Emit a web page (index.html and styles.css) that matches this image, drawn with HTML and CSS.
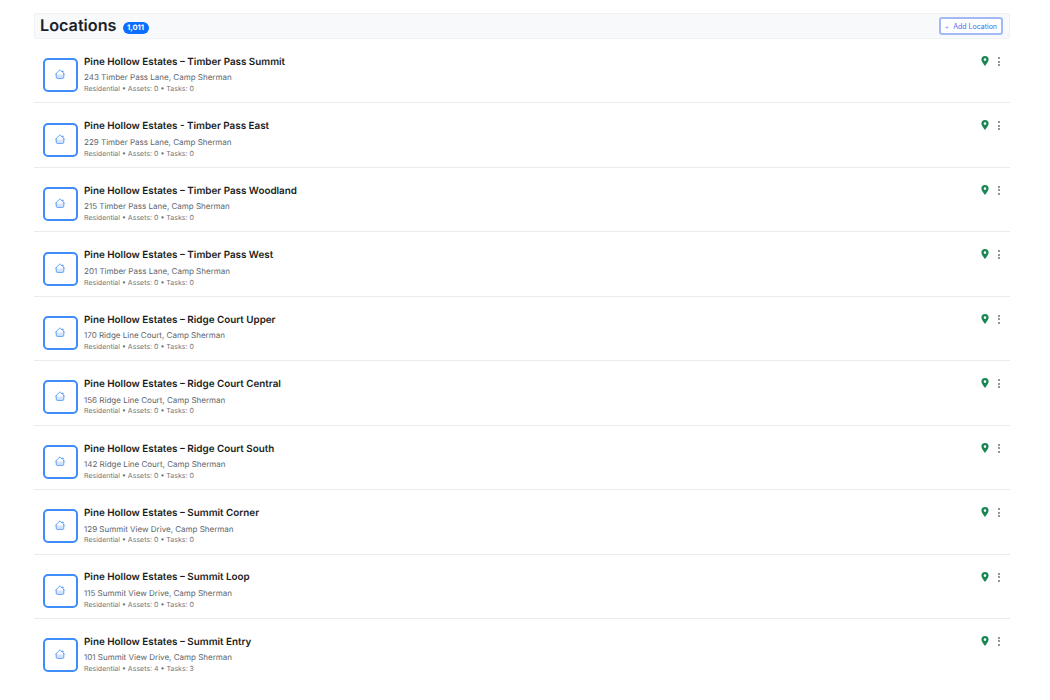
FILE: index.html
```html
<!DOCTYPE html>
<html lang="en">
  <head>
    <meta charset="UTF-8" />
    <title>Locations</title>
    <link rel="stylesheet" href="styles.css">
  </head>
  <body>
    <svg class="icon-defs" width="0" height="0">
      <symbol id="house" viewBox="0 0 12 12">
        <path d="M2.2 6.6h7.6v2.6a1.2 1.2 0 0 1-1.2 1.2H3.4a1.2 1.2 0 0 1-1.2-1.2z" fill="#d6e5ff" />
        <path d="M1.6 6.2 6 1.8l2.2 2.2V3h.9v1.9l1.3 1.3M2.2 5.8v3.4a1.2 1.2 0 0 0 1.2 1.2h5.2a1.2 1.2 0 0 0 1.2-1.2V5.8" fill="none" stroke="#2a7ffa" stroke-width=".7" stroke-linejoin="round" stroke-linecap="round" />
      </symbol>
      <symbol id="pin" viewBox="0 0 8 10">
        <path fill-rule="evenodd" d="M4 0a3.6 3.6 0 0 1 3.6 3.6C7.6 6 4 10 4 10S.4 6 .4 3.6A3.6 3.6 0 0 1 4 0zm0 2.3a1.3 1.3 0 1 0 0 2.6 1.3 1.3 0 0 0 0-2.6z" fill="#198754" />
      </symbol>
    </svg>

    <div class="page">
      <div class="list-header">
        <div class="list-title">
          <h1>Locations</h1>
          <span class="count-badge">1,011</span>
        </div>
        <button class="add-btn"><span class="plus">+</span> Add Location</button>
      </div>

      <div class="location-row">
        <div class="thumb"><svg><use href="#house" /></svg></div>
        <div class="info">
          <div class="name">Pine Hollow Estates – Timber Pass Summit</div>
          <div class="address">243 Timber Pass Lane, Camp Sherman</div>
          <div class="meta">Residential • Assets: 0 • Tasks: 0</div>
        </div>
        <div class="actions"><svg class="pin"><use href="#pin" /></svg><span class="kebab"><i></i><i></i><i></i></span></div>
      </div>

      <div class="location-row">
        <div class="thumb"><svg><use href="#house" /></svg></div>
        <div class="info">
          <div class="name">Pine Hollow Estates - Timber Pass East</div>
          <div class="address">229 Timber Pass Lane, Camp Sherman</div>
          <div class="meta">Residential • Assets: 0 • Tasks: 0</div>
        </div>
        <div class="actions"><svg class="pin"><use href="#pin" /></svg><span class="kebab"><i></i><i></i><i></i></span></div>
      </div>

      <div class="location-row">
        <div class="thumb"><svg><use href="#house" /></svg></div>
        <div class="info">
          <div class="name">Pine Hollow Estates – Timber Pass Woodland</div>
          <div class="address">215 Timber Pass Lane, Camp Sherman</div>
          <div class="meta">Residential • Assets: 0 • Tasks: 0</div>
        </div>
        <div class="actions"><svg class="pin"><use href="#pin" /></svg><span class="kebab"><i></i><i></i><i></i></span></div>
      </div>

      <div class="location-row">
        <div class="thumb"><svg><use href="#house" /></svg></div>
        <div class="info">
          <div class="name">Pine Hollow Estates – Timber Pass West</div>
          <div class="address">201 Timber Pass Lane, Camp Sherman</div>
          <div class="meta">Residential • Assets: 0 • Tasks: 0</div>
        </div>
        <div class="actions"><svg class="pin"><use href="#pin" /></svg><span class="kebab"><i></i><i></i><i></i></span></div>
      </div>

      <div class="location-row">
        <div class="thumb"><svg><use href="#house" /></svg></div>
        <div class="info">
          <div class="name">Pine Hollow Estates – Ridge Court Upper</div>
          <div class="address">170 Ridge Line Court, Camp Sherman</div>
          <div class="meta">Residential • Assets: 0 • Tasks: 0</div>
        </div>
        <div class="actions"><svg class="pin"><use href="#pin" /></svg><span class="kebab"><i></i><i></i><i></i></span></div>
      </div>

      <div class="location-row">
        <div class="thumb"><svg><use href="#house" /></svg></div>
        <div class="info">
          <div class="name">Pine Hollow Estates – Ridge Court Central</div>
          <div class="address">156 Ridge Line Court, Camp Sherman</div>
          <div class="meta">Residential • Assets: 0 • Tasks: 0</div>
        </div>
        <div class="actions"><svg class="pin"><use href="#pin" /></svg><span class="kebab"><i></i><i></i><i></i></span></div>
      </div>

      <div class="location-row">
        <div class="thumb"><svg><use href="#house" /></svg></div>
        <div class="info">
          <div class="name">Pine Hollow Estates – Ridge Court South</div>
          <div class="address">142 Ridge Line Court, Camp Sherman</div>
          <div class="meta">Residential • Assets: 0 • Tasks: 0</div>
        </div>
        <div class="actions"><svg class="pin"><use href="#pin" /></svg><span class="kebab"><i></i><i></i><i></i></span></div>
      </div>

      <div class="location-row">
        <div class="thumb"><svg><use href="#house" /></svg></div>
        <div class="info">
          <div class="name">Pine Hollow Estates – Summit Corner</div>
          <div class="address">129 Summit View Drive, Camp Sherman</div>
          <div class="meta">Residential • Assets: 0 • Tasks: 0</div>
        </div>
        <div class="actions"><svg class="pin"><use href="#pin" /></svg><span class="kebab"><i></i><i></i><i></i></span></div>
      </div>

      <div class="location-row">
        <div class="thumb"><svg><use href="#house" /></svg></div>
        <div class="info">
          <div class="name">Pine Hollow Estates – Summit Loop</div>
          <div class="address">115 Summit View Drive, Camp Sherman</div>
          <div class="meta">Residential • Assets: 0 • Tasks: 0</div>
        </div>
        <div class="actions"><svg class="pin"><use href="#pin" /></svg><span class="kebab"><i></i><i></i><i></i></span></div>
      </div>

      <div class="location-row">
        <div class="thumb"><svg><use href="#house" /></svg></div>
        <div class="info">
          <div class="name">Pine Hollow Estates – Summit Entry</div>
          <div class="address">101 Summit View Drive, Camp Sherman</div>
          <div class="meta">Residential • Assets: 4 • Tasks: 3</div>
        </div>
        <div class="actions"><svg class="pin"><use href="#pin" /></svg><span class="kebab"><i></i><i></i><i></i></span></div>
      </div>
    </div>
  </body>
</html>
```

FILE: styles.css
```css
html,
body {
  height: 100%;
}

body {
  margin: 0;
  font-family: Inter, "Liberation Sans", sans-serif;
  text-rendering: geometricPrecision;
  background: #fff;
  color: #212529;
  overflow: hidden;
}

.icon-defs {
  position: absolute;
}

.page {
  width: 976px;
  margin-left: 34px;
  padding-top: 13px;
}

.list-header {
  display: flex;
  justify-content: space-between;
  align-items: center;
  height: 26px;
  padding: 0 6px 0 5px;
  box-sizing: border-box;
  background: #f8f9fa;
  border: 1px solid #f0f1f2;
  border-radius: 2px;
}

.list-title {
  display: flex;
  align-items: center;
  gap: 6px;
}

.list-title h1 {
  margin: -2px 0 0;
  font-size: 16.2px;
  font-weight: 600;
  line-height: 24px;
  color: #1a1f2b;
}

.count-badge {
  margin-top: 3px;
  padding: 1px 4.5px;
  font-size: 7.5px;
  font-weight: 700;
  line-height: 10px;
  color: #fff;
  background: #0d6efd;
  border-radius: 7px;
}

.add-btn {
  height: 18px;
  padding: 0 4px;
  font-family: inherit;
  font-size: 7px;
  color: #3d6ef0;
  background: #fff;
  border: 2px solid #a3b8f7;
  border-radius: 3px;
}

.plus {
  margin-right: 2px;
  color: #7f9cf5;
}

.location-row {
  display: flex;
  height: 64.45px;
  padding: 13px 10px 0 9px;
  box-sizing: border-box;
  border-bottom: 1px solid #e9ecef;
}

.location-row:last-child {
  border-bottom: 0;
}

.thumb {
  display: flex;
  align-items: center;
  justify-content: center;
  width: 34.5px;
  height: 34px;
  margin-top: 6.3px;
  flex-shrink: 0;
  box-sizing: border-box;
  border: 2px solid #3f8dfb;
  border-radius: 5px;
}

.thumb svg {
  width: 12px;
  height: 12px;
  margin-top: -2px;
}

.info {
  flex: 1;
  margin-left: 6.5px;
}

.name {
  padding-top: 0.9px;
  font-size: 9.85px;
  font-weight: 600;
  line-height: 18px;
  color: #1a1d21;
}

.address {
  margin-top: 0.6px;
  font-size: 8px;
  line-height: 12px;
  color: #5c636a;
}

.meta {
  margin-top: -0.2px;
  font-size: 7px;
  line-height: 11px;
  color: #6c757d;
}

.actions {
  display: flex;
  align-items: flex-start;
  gap: 9px;
  padding-top: 4px;
}

.pin {
  width: 8px;
  height: 10px;
}

.kebab {
  display: flex;
  flex-direction: column;
  gap: 1.5px;
  padding-top: 1px;
}

.kebab i {
  width: 2px;
  height: 2px;
  background: #6c757d;
  border-radius: 50%;
}
```
